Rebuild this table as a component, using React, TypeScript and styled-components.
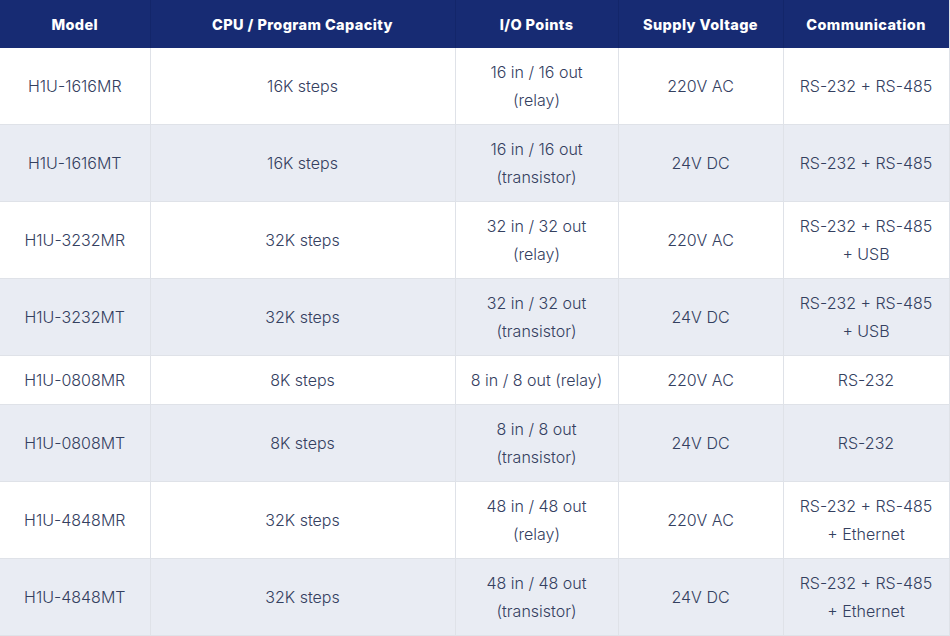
import styled, { createGlobalStyle } from 'styled-components';

const GlobalStyle = createGlobalStyle`
    html, body {
        margin: 0;
        padding: 0;
        background: #ffffff;
    }
    body {
        font-family: Inter, "Open Sans", sans-serif;
    }
`;

type Row = {
    model: string;
    cpu: string;
    io: string[];
    voltage: string;
    comm: string[];
};

const rows: Row[] = [
    { model: 'H1U-1616MR', cpu: '16K steps', io: ['16 in / 16 out', '(relay)'], voltage: '220V AC', comm: ['RS-232 + RS-485'] },
    { model: 'H1U-1616MT', cpu: '16K steps', io: ['16 in / 16 out', '(transistor)'], voltage: '24V DC', comm: ['RS-232 + RS-485'] },
    { model: 'H1U-3232MR', cpu: '32K steps', io: ['32 in / 32 out', '(relay)'], voltage: '220V AC', comm: ['RS-232 + RS-485', '+ USB'] },
    { model: 'H1U-3232MT', cpu: '32K steps', io: ['32 in / 32 out', '(transistor)'], voltage: '24V DC', comm: ['RS-232 + RS-485', '+ USB'] },
    { model: 'H1U-0808MR', cpu: '8K steps', io: ['8 in / 8 out (relay)'], voltage: '220V AC', comm: ['RS-232'] },
    { model: 'H1U-0808MT', cpu: '8K steps', io: ['8 in / 8 out', '(transistor)'], voltage: '24V DC', comm: ['RS-232'] },
    { model: 'H1U-4848MR', cpu: '32K steps', io: ['48 in / 48 out', '(relay)'], voltage: '220V AC', comm: ['RS-232 + RS-485', '+ Ethernet'] },
    { model: 'H1U-4848MT', cpu: '32K steps', io: ['48 in / 48 out', '(transistor)'], voltage: '24V DC', comm: ['RS-232 + RS-485', '+ Ethernet'] },
];

const columns = ['Model', 'CPU / Program Capacity', 'I/O Points', 'Supply Voltage', 'Communication'];
const widths = [150, 305, 163, 165, 166];

const Lines = ({ lines }: { lines: string[] }) => (
    <>
        {lines.map((l, i) => (
            <Line key={i}>{l}</Line>
        ))}
    </>
);

const App = () => {
    return (
        <>
            <GlobalStyle />
            <SpecTable>
                <colgroup>
                    {widths.map((w, i) => (
                        <col key={i} style={{ width: w }} />
                    ))}
                </colgroup>
                <thead>
                    <tr>
                        {columns.map(c => (
                            <HeadCell key={c}>{c}</HeadCell>
                        ))}
                    </tr>
                </thead>
                <tbody>
                    {rows.map((r, i) => (
                        <BodyRow key={r.model} $alt={i % 2 === 1}>
                            <Cell>{r.model}</Cell>
                            <Cell>{r.cpu}</Cell>
                            <Cell><Lines lines={r.io} /></Cell>
                            <Cell>{r.voltage}</Cell>
                            <Cell><Lines lines={r.comm} /></Cell>
                        </BodyRow>
                    ))}
                </tbody>
            </SpecTable>
        </>
    );
};
export default App;

const SpecTable = styled.table`
    width: 949px;
    border-collapse: collapse;
    table-layout: fixed;
    border-right: 1px solid #dfe2e8;
`;

const HeadCell = styled.th`
    height: 48px;
    padding: 0 6px;
    box-sizing: border-box;
    background-color: #172b73;
    color: #ffffff;
    font-family: Inter, "Open Sans", sans-serif;
    font-size: 14.5px;
    font-weight: 800;
    letter-spacing: 0.4px;
    white-space: nowrap;
    text-align: center;
    vertical-align: middle;
    border-left: 1px solid #13266a;

    &:first-child {
        border-left: none;
    }
`;

const BodyRow = styled.tr<{ $alt: boolean }>`
    background-color: ${p => (p.$alt ? '#e9ecf3' : '#ffffff')};
    border-bottom: 1px solid #dfe2e8;
`;

const Cell = styled.td`
    padding: 10px 8px;
    color: #34405f;
    font-family: Inter, "Open Sans", sans-serif;
    font-size: 16px;
    font-weight: 300;
    line-height: 28px;
    text-align: center;
    vertical-align: middle;
    border-left: 1px solid #dfe2e8;

    &:first-child {
        border-left: none;
    }
`;

const Line = styled.div`
    white-space: nowrap;
`;
